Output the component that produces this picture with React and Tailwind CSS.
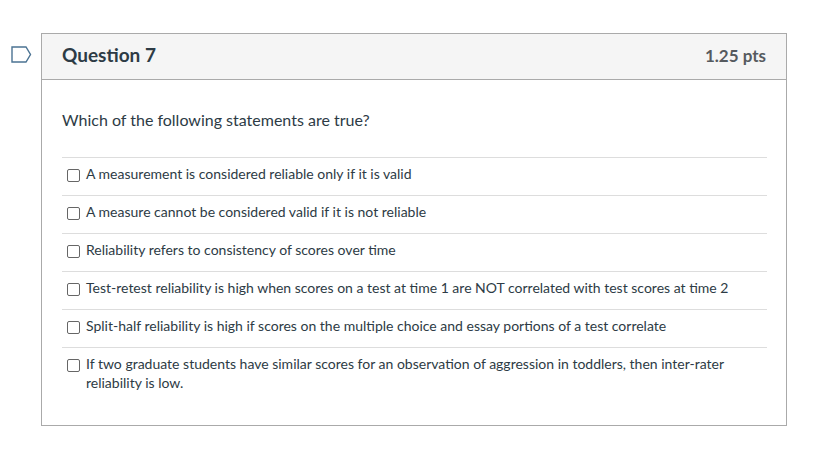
import React from 'react';

const answers = [
  'A measurement is considered reliable only if it is valid',
  'A measure cannot be considered valid if it is not reliable',
  'Reliability refers to consistency of scores over time',
  'Test-retest reliability is high when scores on a test at time 1 are NOT correlated with test scores at time 2',
  'Split-half reliability is high if scores on the multiple choice and essay portions of a test correlate',
  'If two graduate students have similar scores for an observation of aggression in toddlers, then inter-rater reliability is low.',
];

function Flag() {
  return (
    <svg width="21" height="17" viewBox="0 0 21 17" fill="none">
      <path d="M1 1 H15 L19.5 8.5 L15 16 H1 Z" stroke="#4b7393" strokeWidth="1.4" strokeLinejoin="miter" />
    </svg>
  );
}

export default function App() {
  return (
    <div className="w-[817px] h-[456px] bg-white text-[#2d3b45]" style={{ fontFamily: 'Lato, "Noto Sans", sans-serif' }}>
      <div className="flex pt-[33px]">
        <div className="ml-[11px] mt-[13px] w-[21px]">
          <Flag />
        </div>
        <div className="ml-[9px] w-[746px] h-[393px] border border-[#aaaaaa]">
          {/* header */}
          <div className="flex items-center justify-between h-[46px] px-5 bg-[#f5f5f5] border-b border-[#aaaaaa]">
            <h2 className="text-[19px] font-bold leading-none mb-[4px]">Question 7</h2>
            <span className="text-[17px] font-bold text-[#555a5f] leading-none mb-[2px]">1.25 pts</span>
          </div>

          {/* body */}
          <div className="pl-5 pr-[19px] pt-[28px]">
            <p className="text-[16px] leading-6 mb-[25px]">Which of the following statements are true?</p>
            <div>
              {answers.map((a) => (
                <label key={a} className="flex items-start border-t border-[#dddddd] pt-[6px] pb-[12px] text-[14px] leading-[19px]">
                  <span className="ml-[5px] mt-[5px] w-[13px] h-[13px] shrink-0 rounded-[2px] border border-[#666666] bg-white" />
                  <span className="ml-[6px]">{a}</span>
                </label>
              ))}
            </div>
          </div>
        </div>
      </div>
    </div>
  );
}
